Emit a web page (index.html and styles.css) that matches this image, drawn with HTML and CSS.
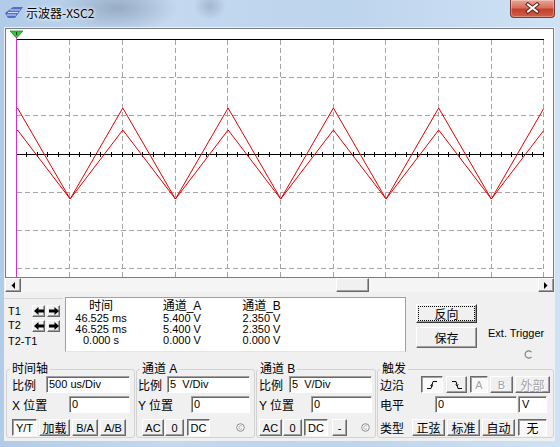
FILE: index.html
```html
<!DOCTYPE html>
<html>
<head>
<meta charset="utf-8">
<link rel="stylesheet" href="styles.css">
</head>
<body>
<div class="window">
  <div class="titlebar">
    <svg class="app-icon" width="18" height="11" viewBox="0 0 18 11">
      <path d="M0 6 L8 0 H18 L10 11 H3 Z" fill="#4f6fc8"/>
      <path d="M3 5.5 H13 M5 3 H15 M2 8 H11" stroke="#d6e2fb" stroke-width="1"/>
    </svg>
    <span class="title">示波器-XSC2</span>
    <div class="close">
      <svg width="43" height="17" viewBox="0 0 43 17">
        <path d="M17 4.5 L26 11.5 M26 4.5 L17 11.5" stroke="#5a1f17" stroke-width="4" stroke-linecap="square"/>
        <path d="M17 4.5 L26 11.5 M26 4.5 L17 11.5" stroke="#ffffff" stroke-width="2" stroke-linecap="square"/>
      </svg>
    </div>
  </div>

  <div class="client">
    <div class="screen">
      <svg class="plot" width="547" height="248" viewBox="0 0 547 248">
        <g fill="none" stroke="#a4a4a4" stroke-width="1" stroke-dasharray="5 3">
          <path d="M63.5 11V248M116.5 11V248M169.5 11V248M221.5 11V248M274.5 11V248M327.5 11V248M379.5 11V248M432.5 11V248M485.5 11V248M537.5 11V248"/>
          <path d="M11 48.5H538M11 86.5H538M11 163.5H538M11 201.5H538M11 239.5H538"/>
        </g>
        <path d="M10 10.5H538M10 125.5H538" stroke="#000" stroke-width="1"/>
        <path d="M20.5 123v5M31.5 123v5M41.5 123v5M52.5 123v5M63.5 123v5M73.5 123v5M84.5 123v5M94.5 123v5M105.5 123v5M116.5 123v5M126.5 123v5M136.5 123v5M147.5 123v5M158.5 123v5M169.5 123v5M179.5 123v5M189.5 123v5M200.5 123v5M210.5 123v5M221.5 123v5M231.5 123v5M242.5 123v5M252.5 123v5M263.5 123v5M274.5 123v5M284.5 123v5M295.5 123v5M305.5 123v5M316.5 123v5M327.5 123v5M337.5 123v5M347.5 123v5M358.5 123v5M368.5 123v5M379.5 123v5M389.5 123v5M400.5 123v5M411.5 123v5M421.5 123v5M432.5 123v5M442.5 123v5M453.5 123v5M463.5 123v5M474.5 123v5M485.5 123v5M495.5 123v5M505.5 123v5M516.5 123v5M526.5 123v5M537.5 123v5" stroke="#000" stroke-width="1"/>
        <polyline fill="none" stroke="#e60000" stroke-width="1" points="10,81.6 11.5,79 64.15,170 116.8,79 169.45,170 222.1,79 274.75,170 327.4,79 380.05,170 432.7,79 485.35,170 537.5,79.9"/>
        <polyline fill="none" stroke="#e60000" stroke-width="1" points="10,103 11.5,101 64.15,170 116.8,101 169.45,170 222.1,101 274.75,170 327.4,101 380.05,170 432.7,101 485.35,170 537.5,101.7"/>
        <path d="M10.5 8V248" stroke="#cc33cc" stroke-width="1"/>
        <polygon points="4,2 17,2 10.5,9" fill="#33c23a" stroke="#1f8f25" stroke-width="0.8"/>
        <path d="M10.5 3V6" stroke="#0a3a0a" stroke-width="1"/>
      </svg>
    </div>

    <div class="hscroll">
      <div class="sbtn">
        <svg width="4" height="7" viewBox="0 0 4 7"><path d="M4 0V7L0.5 3.5Z" fill="#000"/></svg>
      </div>
      <div class="track"><div class="thumb"></div></div>
      <div class="sbtn">
        <svg width="4" height="7" viewBox="0 0 4 7"><path d="M0 0V7L3.5 3.5Z" fill="#000"/></svg>
      </div>
    </div>

    <div class="info">
      <div class="cursors">
        <div class="ctop">
          <div class="clabels">
            <div>T1</div>
            <div>T2</div>
          </div>
          <div class="carrows">
            <div class="abtn"><svg width="10" height="8" viewBox="0 0 10 8"><path d="M0 4L4.5 0V2.5H10V5.5H4.5V8Z" fill="#000"/></svg></div>
            <div class="abtn"><svg width="10" height="8" viewBox="0 0 10 8"><path d="M10 4L5.5 0V2.5H0V5.5H5.5V8Z" fill="#000"/></svg></div>
            <div class="abtn"><svg width="10" height="8" viewBox="0 0 10 8"><path d="M0 4L4.5 0V2.5H10V5.5H4.5V8Z" fill="#000"/></svg></div>
            <div class="abtn"><svg width="10" height="8" viewBox="0 0 10 8"><path d="M10 4L5.5 0V2.5H0V5.5H5.5V8Z" fill="#000"/></svg></div>
          </div>
        </div>
        <div class="t2t1">T2-T1</div>
      </div>

      <div class="readout">
        <div class="rh">时间</div><div class="rh">通道_A</div><div class="rh">通道_B</div>
        <div>46.525 ms</div><div>5.400 V</div><div>2.350 V</div>
        <div>46.525 ms</div><div>5.400 V</div><div>2.350 V</div>
        <div>0.000 s</div><div>0.000 V</div><div>0.000 V</div>
      </div>

      <div class="side">
        <div class="pbtn reverse"><span>反向</span></div>
        <div></div>
        <div class="pbtn save">保存</div>
        <div class="ext">Ext. Trigger</div>
        <div></div>
        <svg class="term" width="9" height="9" viewBox="0 0 9 9"><path d="M7.5 2.2A3.6 3.6 0 1 0 7.5 6.8" fill="none" stroke="#7c7c7c" stroke-width="1.1"/></svg>
      </div>
    </div>

    <div class="controls">
      <fieldset class="grp g-time">
        <legend>时间轴</legend>
        <div class="row">
          <span class="lbl">比例</span>
          <div class="field w84">500 us/Div</div>
        </div>
        <div class="row">
          <span class="lbl">X 位置</span>
          <div class="field w61">0</div>
        </div>
        <div class="row last">
          <div class="btn on w25">Y/T</div>
          <div class="btn cjk w31 ml2">加载</div>
          <div class="btn w26 ml2">B/A</div>
          <div class="btn w26 ml2">A/B</div>
        </div>
      </fieldset>

      <fieldset class="grp g-a">
        <legend>通道 A</legend>
        <div class="row">
          <span class="lbl">比例</span>
          <div class="field w83">5  V/Div</div>
        </div>
        <div class="row">
          <span class="lbl">Y 位置</span>
          <div class="field w59">0</div>
        </div>
        <div class="row last">
          <div class="btn w22 ml4">AC</div>
          <div class="btn w19 ml1">0</div>
          <div class="btn on w23 ml3">DC</div>
          <svg class="radio" width="9" height="9" viewBox="0 0 9 9"><circle cx="4.5" cy="4.5" r="3.8" fill="#f4f4f4" stroke="#8e8e8e" stroke-width="1"/><path d="M6 3.2A1.8 1.8 0 1 0 6 5.8" fill="none" stroke="#b4b4b4" stroke-width="1"/></svg>
        </div>
      </fieldset>

      <fieldset class="grp g-b">
        <legend>通道 B</legend>
        <div class="row">
          <span class="lbl">比例</span>
          <div class="field w83">5  V/Div</div>
        </div>
        <div class="row">
          <span class="lbl">Y 位置</span>
          <div class="field w61">0</div>
        </div>
        <div class="row last">
          <div class="btn w23">AC</div>
          <div class="btn w19 ml1">0</div>
          <div class="btn on w24 ml2">DC</div>
          <div class="btn w15 ml4">-</div>
          <svg class="radio" width="9" height="9" viewBox="0 0 9 9"><circle cx="4.5" cy="4.5" r="3.8" fill="#f4f4f4" stroke="#8e8e8e" stroke-width="1"/><path d="M6 3.2A1.8 1.8 0 1 0 6 5.8" fill="none" stroke="#b4b4b4" stroke-width="1"/></svg>
        </div>
      </fieldset>

      <fieldset class="grp g-trig">
        <legend>触发</legend>
        <div class="row">
          <span class="lbl">边沿</span>
          <div class="btn on w22 mla">
            <svg width="10" height="8" viewBox="0 0 10 8"><path d="M0 7.5H4L6 0.5H10" fill="none" stroke="#000" stroke-width="1"/><path d="M3.3 4.6L5 3.6L5.6 5.4" fill="none" stroke="#000" stroke-width="0.9"/></svg>
          </div>
          <div class="btn w21 ml3">
            <svg width="10" height="8" viewBox="0 0 10 8"><path d="M0 0.5H4L6 7.5H10" fill="none" stroke="#000" stroke-width="1"/><path d="M3.6 3.6L5.1 4.8L6.4 3.4" fill="none" stroke="#000" stroke-width="0.9"/></svg>
          </div>
          <div class="btn on off w18 ml3">A</div>
          <div class="btn off w23 ml2">B</div>
          <div class="btn off cjk w35 ml2">外部</div>
        </div>
        <div class="row">
          <span class="lbl">电平</span>
          <div class="field w82">0</div>
          <div class="field unit w29 ml1 mr3">V</div>
        </div>
        <div class="row last">
          <span class="lbl">类型</span>
          <div class="btn cjk w33 mla">正弦</div>
          <div class="btn cjk w33 ml2">标准</div>
          <div class="btn cjk w33 ml2">自动</div>
          <div class="btn on cjk w29 ml3 mr3">无</div>
        </div>
      </fieldset>
    </div>
  </div>
</div>
</body>
</html>
```

FILE: styles.css
```css
* { box-sizing: border-box; }
html, body { margin: 0; padding: 0; }
body {
  width: 560px;
  height: 447px;
  overflow: hidden;
  font-family: "Liberation Sans", "Noto Sans CJK SC", sans-serif;
  font-size: 11px;
  color: #000;
  background: #bcd5ef;
}

.window {
  width: 560px;
  height: 447px;
  display: flex;
  flex-direction: column;
  background:
    radial-gradient(60px 24px at 118px 8px, rgba(105,122,146,0.45), rgba(105,122,146,0)),
    radial-gradient(16px 14px at 210px 6px, rgba(105,122,146,0.35), rgba(105,122,146,0)),
    linear-gradient(to right, #b1cbe8 0%, #c4d9f0 30%, #bdd4ed 60%, #cfe2f5 100%);
}

/* title bar */
.titlebar {
  flex: none;
  height: 27px;
  display: flex;
  align-items: flex-start;
}
.app-icon { flex: none; margin: 7px 0 0 5px; display: block; }
.title {
  margin: 5px 0 0 3px;
  font-family: "Noto Sans CJK SC", "Liberation Sans", sans-serif;
  font-size: 12px;
  line-height: 16px;
  text-shadow: 0 0 5px #fff, 0 0 3px #fff;
}
.close {
  margin-left: auto;
  margin-right: 5px;
  width: 45px;
  height: 18px;
  border: 1px solid #7a3a33;
  border-top: none;
  border-radius: 0 0 4px 4px;
  background: linear-gradient(#e9a597, #d6705f 45%, #c4402c 55%, #d05e47);
  box-shadow: inset 0 0 0 1px rgba(255,255,255,0.3);
}
.close svg { display: block; }

/* client area */
.client {
  flex: 1;
  min-height: 0;
  margin: 0 5px 6px 4px;
  background: #f0f0f0;
  display: flex;
  flex-direction: column;
}

.screen {
  flex: none;
  margin: 1px 0 0 1px;
  width: 549px;
  height: 250px;
  border: 1px solid #7c7c7c;
  background: #fff;
}
.screen svg { display: block; }

/* scrollbar */
.hscroll {
  flex: none;
  display: flex;
  margin-left: 1px;
  width: 549px;
  height: 14px;
  background: #f5f5f5;
}
.sbtn, .thumb, .abtn, .btn, .pbtn {
  border: 1px solid;
  border-color: #fff #696969 #696969 #fff;
  box-shadow: inset -1px -1px 0 #a0a0a0;
  background: #f0f0f0;
}
.sbtn {
  flex: none;
  width: 16px;
  height: 14px;
  display: flex;
  align-items: center;
  justify-content: center;
}
.track { flex: 1; display: flex; }
.thumb { margin-left: 315px; width: 33px; height: 14px; }

/* info strip */
.info {
  flex: none;
  display: flex;
  height: 63px;
}
.cursors {
  flex: none;
  width: 59px;
  align-self: flex-start;
  margin-top: 6px;
  padding-left: 4px;
  border-top: 1px solid #d5d5d5;
}
.ctop { display: flex; }
.clabels {
  width: 24px;
  padding-top: 5px;
  line-height: 14px;
}
.carrows {
  display: grid;
  grid-template-columns: 13px 13px;
  column-gap: 2px;
  row-gap: 3px;
  margin-top: 6px;
  align-content: start;
}
.abtn {
  width: 13px;
  height: 12px;
  display: flex;
  align-items: center;
  justify-content: center;
}
.abtn svg { display: block; }
.t2t1 { margin-top: 4px; line-height: 11px; }

.readout {
  flex: none;
  width: 341px;
  height: 55px;
  margin: 5px 0 0 2px;
  padding-top: 2px;
  border: 1px solid;
  border-color: #a0a0a0 #a0a0a0 #e4e4e4 #a0a0a0;
  background: #fff;
  display: grid;
  grid-template-columns: 70px 92px 67px;
  align-content: start;
  text-align: center;
  line-height: 11px;
  white-space: nowrap;
}
.rh { font-size: 12px; line-height: 13px; }

.side {
  flex: 1;
  display: grid;
  grid-template-columns: 61px auto;
  column-gap: 11px;
  align-content: start;
  align-items: start;
  padding-left: 10px;
}
.pbtn {
  display: flex;
  align-items: center;
  justify-content: center;
  font-size: 12px;
}
.reverse {
  margin-top: 12px;
  height: 19px;
  padding: 1px;
  align-items: stretch;
  border-color: #fff #303030 #303030 #fff;
}
.reverse span {
  flex: 1;
  display: flex;
  align-items: center;
  justify-content: center;
  border: 1px dotted #000;
}
.save { margin-top: 4px; height: 21px; }
.ext { margin-top: 5px; line-height: 11px; white-space: nowrap; }
.term { display: block; margin: 2px 0 0 36px; }

/* control groups */
.controls {
  flex: none;
  display: flex;
  margin: 8px 0 0 2px;
}
.grp {
  flex: none;
  margin: 0;
  min-width: 0;
  height: 75px;
  border: 1px solid #d2d2d2;
  border-radius: 3px;
}
.grp legend {
  padding: 0 2px;
  font-size: 12px;
  line-height: 12px;
  white-space: nowrap;
}
.g-time { width: 129px; padding: 1px 4px 1px 5px; }
.g-time legend { margin-left: -2px; }
.g-a { width: 119px; margin-left: 1px; padding: 1px 4px 1px 1px; }
.g-a legend { margin-left: 2px; }
.g-b { width: 120px; margin-left: 1px; padding: 1px 3px 1px 2px; }
.g-b legend { margin-left: -1px; }
.g-trig { width: 177px; margin-left: 1px; padding: 1px 3px 1px 2px; }
.g-trig legend { margin-left: 0; }

.row {
  display: flex;
  align-items: center;
  height: 17px;
}
.row + .row { margin-top: 3px; }
.row.last { margin-top: 6px; }
.lbl { font-size: 12px; white-space: nowrap; }

.field {
  flex: none;
  margin-left: auto;
  height: 17px;
  padding-left: 2px;
  border: 1px solid;
  border-color: #a0a0a0 #fff #fff #a0a0a0;
  box-shadow: inset 1px 1px 0 #696969;
  background: #fff;
  line-height: 15px;
  white-space: pre;
  overflow: hidden;
}
.field.unit { padding-left: 3px; }

.btn {
  flex: none;
  height: 17px;
  display: flex;
  align-items: center;
  justify-content: center;
  white-space: nowrap;
}
.btn svg { display: block; }
.btn.on {
  border-color: #696969 #fff #fff #696969;
  box-shadow: inset 1px 1px 0 #a0a0a0;
  background: #f9f9f9;
}
.btn.off { color: #a3a3a3; text-shadow: 1px 1px 0 #fff; }
.cjk { font-size: 12px; }

.radio { flex: none; display: block; margin-left: auto; }
.g-a .radio { margin-right: 5px; }
.g-b .radio { margin-right: 2px; }

/* sizes and spacing */
.w15 { width: 15px; }
.w18 { width: 18px; }
.w19 { width: 19px; }
.w21 { width: 21px; }
.w22 { width: 22px; }
.w23 { width: 23px; }
.w24 { width: 24px; }
.w25 { width: 25px; }
.w26 { width: 26px; }
.w29 { width: 29px; }
.w31 { width: 31px; }
.w33 { width: 33px; }
.w35 { width: 35px; }
.w59 { width: 59px; }
.w61 { width: 61px; }
.w82 { width: 82px; }
.w83 { width: 83px; }
.w84 { width: 84px; }
.ml1 { margin-left: 1px; }
.ml2 { margin-left: 2px; }
.ml3 { margin-left: 3px; }
.ml4 { margin-left: 4px; }
.mla { margin-left: auto; }
.mr3 { margin-right: 3px; }
```
